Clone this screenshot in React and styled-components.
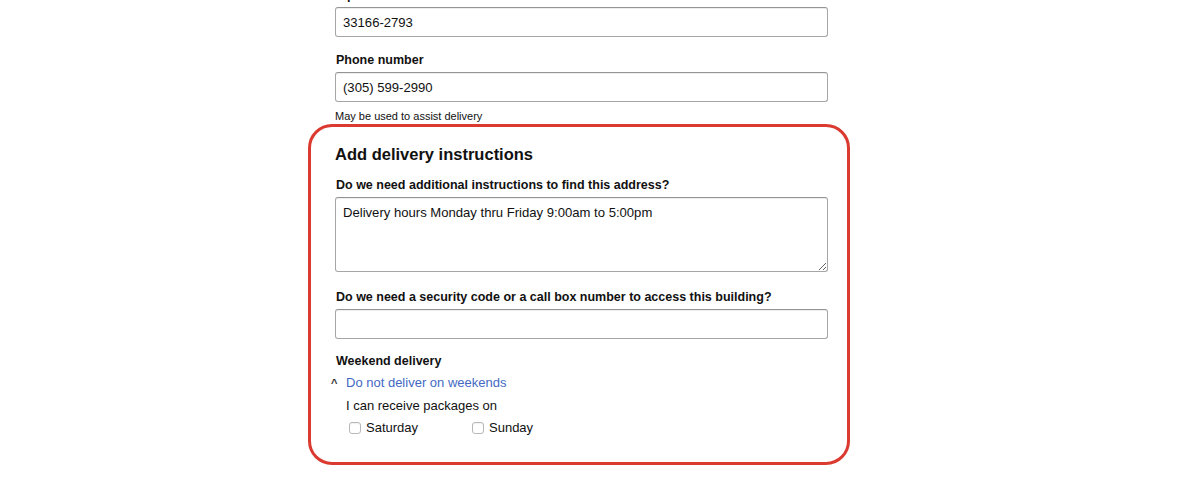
import React from 'react'
import styled, { createGlobalStyle } from 'styled-components'

const GlobalStyle = createGlobalStyle`
  html, body {
    margin: 0;
    padding: 0;
    background: #fff;
    overflow: hidden;
  }
  body {
    font-family: "Liberation Sans", Arial, sans-serif;
    color: #111;
  }
`

const Page = styled.div`
  width: 1200px;
  height: 480px;
  overflow: hidden;
`

const Column = styled.div`
  margin-left: 308px;
  margin-top: -13px;
  width: 542px;
`

const Fields = styled.div`
  padding-left: 27px;
  width: 493px;
`

const Field = styled.div`
  display: flex;
  flex-direction: column;
  gap: 3px;
  margin-top: ${props => props.gap || 0}px;
`

const Label = styled.label`
  font-size: 12.5px;
  line-height: 17px;
  font-weight: 700;
  color: #111;
  padding-left: 1px;
`

const Input = styled.input`
  box-sizing: border-box;
  width: 100%;
  height: 30px;
  padding: 0 7px;
  border: 1px solid #a6a6a6;
  border-top-color: #949494;
  border-radius: 3px;
  box-shadow: 0 1px 0 rgba(255, 255, 255, 0.5), inset 0 1px 0 rgba(0, 0, 0, 0.07);
  font-family: inherit;
  font-size: 13.1px;
  color: #111;
  outline: none;
`

const TextArea = styled.textarea`
  box-sizing: border-box;
  width: 100%;
  height: 75px;
  padding: 6px 7px;
  border: 1px solid #a6a6a6;
  border-top-color: #949494;
  border-radius: 3px;
  box-shadow: inset 0 1px 0 rgba(0, 0, 0, 0.07);
  font-family: inherit;
  font-size: 13.1px;
  line-height: 17px;
  color: #111;
  outline: none;
  resize: both;
`

const Hint = styled.div`
  margin-top: 7px;
  font-size: 11px;
  line-height: 14px;
  color: #111;
`

const Highlight = styled.section`
  margin-top: 1px;
  border: 3px solid #da3a2f;
  border-radius: 24px;
  padding: 16px 19px 26px 24px;
`

const Heading = styled.h2`
  margin: 0;
  font-size: 16.5px;
  line-height: 22px;
  font-weight: 700;
  color: #111;
`

const ToggleLink = styled.a`
  display: flex;
  align-items: center;
  margin-top: 1px;
  margin-left: -4px;
  font-size: 13px;
  line-height: 17px;
  color: #4469c4;
  text-decoration: none;
  cursor: pointer;
`

const Caret = styled.span`
  width: 15px;
  font-size: 11px;
  font-weight: 700;
  color: #333;
  text-align: left;
  transform: translateY(1px);
`

const Note = styled.div`
  margin-left: 11px;
  margin-top: 6px;
  font-size: 13px;
  line-height: 17px;
  color: #111;
`

const Days = styled.div`
  display: flex;
  margin: 5px 0 0 14px;
`

const Day = styled.label`
  display: flex;
  align-items: center;
  gap: 5px;
  width: ${props => props.width}px;
  font-size: 13px;
  line-height: 17px;
  color: #111;
`

const Box = styled.span`
  box-sizing: border-box;
  width: 12px;
  height: 12px;
  border: 1px solid #b8b8b8;
  border-radius: 3px;
  box-shadow: inset 0 1px 1px rgba(0, 0, 0, 0.06);
  background: #fff;
`

export default function App() {
  return (
    <Page>
      <GlobalStyle />
      <Column>
        <Fields>
          <Field>
            <Label>Zip code</Label>
            <Input defaultValue="33166-2793" />
          </Field>
          <Field gap={15}>
            <Label>Phone number</Label>
            <Input defaultValue="(305) 599-2990" />
          </Field>
          <Hint>May be used to assist delivery</Hint>
        </Fields>
        <Highlight>
          <Heading>Add delivery instructions</Heading>
          <Field gap={12}>
            <Label>Do we need additional instructions to find this address?</Label>
            <TextArea defaultValue="Delivery hours Monday thru Friday 9:00am to 5:00pm" />
          </Field>
          <Field gap={17}>
            <Label>Do we need a security code or a call box number to access this building?</Label>
            <Input defaultValue="" />
          </Field>
          <Field gap={14}>
            <Label>Weekend delivery</Label>
            <ToggleLink>
              <Caret>^</Caret>
              Do not deliver on weekends
            </ToggleLink>
          </Field>
          <Note>I can receive packages on</Note>
          <Days>
            <Day width={123}>
              <Box />
              Saturday
            </Day>
            <Day width={100}>
              <Box />
              Sunday
            </Day>
          </Days>
        </Highlight>
      </Column>
    </Page>
  )
}
